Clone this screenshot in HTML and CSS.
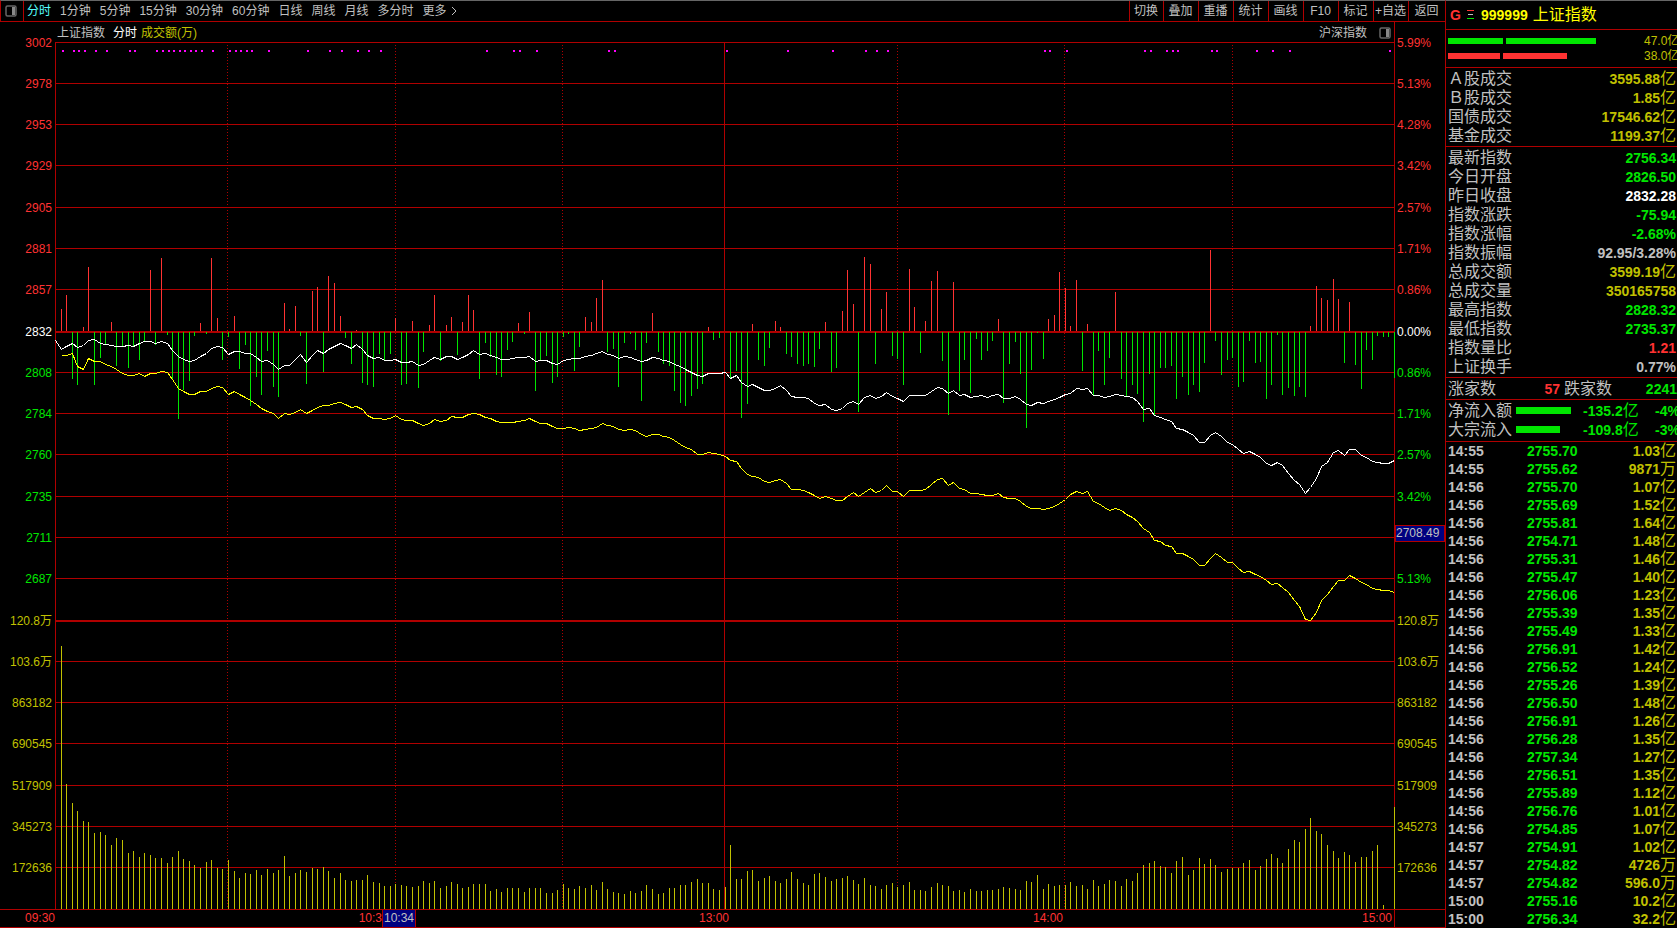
FILE: index.html
```html
<!DOCTYPE html>
<html lang="zh-CN">
<head>
<meta charset="utf-8">
<title>上证指数 分时</title>
<link rel="stylesheet" href="styles.css">
</head>
<body>
<div class="app">
  <main class="main">
    <header class="toolbar">
      <button class="panel-btn" aria-label="面板">
        <svg width="12" height="12" viewBox="0 0 12 12"><rect x="1" y="1" width="10" height="10" rx="1.500" fill="none" stroke="#666" stroke-width="1.500"/><rect x="7" y="2" width="3" height="8" fill="#888"/></svg>
      </button>
      <nav class="periods">
        <button class="active">分时</button><button>1分钟</button><button>5分钟</button><button>15分钟</button><button>30分钟</button><button>60分钟</button><button>日线</button><button>周线</button><button>月线</button><button>多分时</button><button class="more">更多<svg width="6" height="10" viewBox="0 0 6 10"><path d="M1 1l4 4-4 4" fill="none" stroke="currentColor"/></svg></button>
      </nav>
      <nav class="tools">
        <button>切换</button><button>叠加</button><button>重播</button><button>统计</button><button>画线</button><button>F10</button><button>标记</button><button>+自选</button><button>返回</button>
      </nav>
    </header>
    <section class="chart">
      <div class="axis axis-left">
        <span class="up">3002</span><span class="up">2978</span><span class="up">2953</span><span class="up">2929</span><span class="up">2905</span><span class="up">2881</span><span class="up">2857</span><span class="flat">2832</span><span class="down">2808</span><span class="down">2784</span><span class="down">2760</span><span class="down">2735</span><span class="down">2711</span><span class="down">2687</span><span class="vol">120.8万</span><span class="vol">103.6万</span><span class="vol">863182</span><span class="vol">690545</span><span class="vol">517909</span><span class="vol">345273</span><span class="vol">172636</span>
      </div>
      <div class="plot">
        <div class="plot-head">
          <span>上证指数</span><span class="flat view">分时</span><span class="vol">成交额(万)</span>
          <span class="market">沪深指数</span>
          <button class="panel-btn" aria-label="右侧面板">
            <svg width="12" height="12" viewBox="0 0 12 12"><rect x="1" y="1" width="10" height="10" rx="1.500" fill="none" stroke="#666" stroke-width="1.500"/><rect x="7" y="2" width="3" height="8" fill="#888"/></svg>
          </button>
        </div>
        <div class="canvas"><svg id="plot" viewBox="0 0 1340 867" preserveAspectRatio="none" role="img" aria-label="分时走势"></svg></div>
      </div>
      <div class="axis axis-right">
        <span class="up">5.99%</span><span class="up">5.13%</span><span class="up">4.28%</span><span class="up">3.42%</span><span class="up">2.57%</span><span class="up">1.71%</span><span class="up">0.86%</span><span class="flat">0.00%</span><span class="down">0.86%</span><span class="down">1.71%</span><span class="down">2.57%</span><span class="down">3.42%</span><span class="marked"><b class="tag price-tag">2708.49</b></span><span class="down">5.13%</span><span class="vol">120.8万</span><span class="vol">103.6万</span><span class="vol">863182</span><span class="vol">690545</span><span class="vol">517909</span><span class="vol">345273</span><span class="vol">172636</span>
      </div>
    </section>
    <footer class="times">
      <span>09:30</span><span class="marked">10:3<b class="tag time-tag">10:34</b></span><span>13:00</span><span>14:00</span><span class="close">15:00</span><span class="corner"></span>
    </footer>
  </main>
  <aside class="side">
    <h1 class="title">
      <span class="market-flag">G</span>
      <svg width="8" height="10" viewBox="0 0 8 10" shape-rendering="crispEdges"><rect width="7" height="1" fill="#ff3232"/><rect x="1" y="4" width="5" height="1" fill="#c0c0c0"/><rect y="8" width="7" height="1" fill="#00e600"/></svg>
      <span class="code">999999</span><span class="name">上证指数</span>
    </h1>
    <section class="power">
      <div><i class="bar green" style="width:55px"></i><i class="bar green" style="width:90px"></i><span>47.0亿</span></div>
      <div><i class="bar red" style="width:52px"></i><i class="bar red" style="width:64px"></i><span>38.0亿</span></div>
    </section>
    <dl class="facts">
      <div><dt>Ａ股成交</dt><dd class="vol">3595.88<small>亿</small></dd></div>
      <div><dt>Ｂ股成交</dt><dd class="vol">1.85<small>亿</small></dd></div>
      <div><dt>国债成交</dt><dd class="vol">17546.62<small>亿</small></dd></div>
      <div><dt>基金成交</dt><dd class="vol">1199.37<small>亿</small></dd></div>
    </dl>
    <dl class="facts">
      <div><dt>最新指数</dt><dd class="down">2756.34</dd></div>
      <div><dt>今日开盘</dt><dd class="down">2826.50</dd></div>
      <div><dt>昨日收盘</dt><dd class="flat">2832.28</dd></div>
      <div><dt>指数涨跌</dt><dd class="down">-75.94</dd></div>
      <div><dt>指数涨幅</dt><dd class="down">-2.68%</dd></div>
      <div><dt>指数振幅</dt><dd>92.95/3.28%</dd></div>
      <div><dt>总成交额</dt><dd class="vol">3599.19<small>亿</small></dd></div>
      <div><dt>总成交量</dt><dd class="vol">350165758</dd></div>
      <div><dt>最高指数</dt><dd class="down">2828.32</dd></div>
      <div><dt>最低指数</dt><dd class="down">2735.37</dd></div>
      <div><dt>指数量比</dt><dd class="up">1.21</dd></div>
      <div><dt>上证换手</dt><dd>0.77%</dd></div>
    </dl>
    <dl class="breadth">
      <dt>涨家数</dt><dd class="up">57</dd><dt>跌家数</dt><dd class="down">2241</dd>
    </dl>
    <section class="flows">
      <div><span class="label">净流入额</span><span><i class="bar green" style="width:55px"></i></span><span class="amount">-135.2<small>亿</small></span><span class="rate">-4%</span></div>
      <div><span class="label">大宗流入</span><span><i class="bar green" style="width:44px"></i></span><span class="amount">-109.8<small>亿</small></span><span class="rate">-3%</span></div>
    </section>
    <table class="ticks">
      <tbody>
        <tr><td>14:55</td><td>2755.70</td><td>1.03<small>亿</small></td></tr>
        <tr><td>14:55</td><td>2755.62</td><td>9871<small>万</small></td></tr>
        <tr><td>14:56</td><td>2755.70</td><td>1.07<small>亿</small></td></tr>
        <tr><td>14:56</td><td>2755.69</td><td>1.52<small>亿</small></td></tr>
        <tr><td>14:56</td><td>2755.81</td><td>1.64<small>亿</small></td></tr>
        <tr><td>14:56</td><td>2754.71</td><td>1.48<small>亿</small></td></tr>
        <tr><td>14:56</td><td>2755.31</td><td>1.46<small>亿</small></td></tr>
        <tr><td>14:56</td><td>2755.47</td><td>1.40<small>亿</small></td></tr>
        <tr><td>14:56</td><td>2756.06</td><td>1.23<small>亿</small></td></tr>
        <tr><td>14:56</td><td>2755.39</td><td>1.35<small>亿</small></td></tr>
        <tr><td>14:56</td><td>2755.49</td><td>1.33<small>亿</small></td></tr>
        <tr><td>14:56</td><td>2756.91</td><td>1.42<small>亿</small></td></tr>
        <tr><td>14:56</td><td>2756.52</td><td>1.24<small>亿</small></td></tr>
        <tr><td>14:56</td><td>2755.26</td><td>1.39<small>亿</small></td></tr>
        <tr><td>14:56</td><td>2756.50</td><td>1.48<small>亿</small></td></tr>
        <tr><td>14:56</td><td>2756.91</td><td>1.26<small>亿</small></td></tr>
        <tr><td>14:56</td><td>2756.28</td><td>1.35<small>亿</small></td></tr>
        <tr><td>14:56</td><td>2757.34</td><td>1.27<small>亿</small></td></tr>
        <tr><td>14:56</td><td>2756.51</td><td>1.35<small>亿</small></td></tr>
        <tr><td>14:56</td><td>2755.89</td><td>1.12<small>亿</small></td></tr>
        <tr><td>14:56</td><td>2756.76</td><td>1.01<small>亿</small></td></tr>
        <tr><td>14:56</td><td>2754.85</td><td>1.07<small>亿</small></td></tr>
        <tr><td>14:57</td><td>2754.91</td><td>1.02<small>亿</small></td></tr>
        <tr><td>14:57</td><td>2754.82</td><td>4726<small>万</small></td></tr>
        <tr><td>14:57</td><td>2754.82</td><td>596.0<small>万</small></td></tr>
        <tr><td>15:00</td><td>2755.16</td><td>10.2<small>亿</small></td></tr>
        <tr><td>15:00</td><td>2756.34</td><td>32.2<small>亿</small></td></tr>
      </tbody>
    </table>
  </aside>
</div>
<script src="chart.js"></script>
</body>
</html>
```

FILE: styles.css
```css
* { box-sizing: border-box; }

:root {
  --line: #b00000;
  --red: #ff3232;
  --green: #00e600;
  --gold: #c0c000;
  --text: #c0c0c0;
}

body {
  margin: 0;
  background: #000;
  color: var(--text);
  font: 12px/16px "Liberation Sans", "Noto Sans CJK SC", sans-serif;
}

button {
  margin: 0;
  padding: 0;
  border: 0;
  background: none;
  color: inherit;
  font: inherit;
  white-space: nowrap;
  cursor: pointer;
}

.up { color: var(--red); }
.down { color: var(--green); }
.flat { color: #fff; }
.vol { color: var(--gold); }

.app {
  display: grid;
  grid-template-columns: minmax(0, 1fr) 232px;
  min-height: 100vh;
  overflow: hidden;
}

.main {
  display: flex;
  flex-direction: column;
  min-width: 0;
}

/* toolbar */
.toolbar {
  display: flex;
  height: 22px;
  border-top: 1px solid #666;
  border-bottom: 1px solid var(--line);
  border-left: 1px solid var(--line);
}

.panel-btn {
  display: flex;
  align-items: center;
  justify-content: center;
}

.toolbar .panel-btn {
  width: 23px;
  padding-right: 2px;
  border-right: 1px solid var(--line);
}

.periods {
  display: flex;
  flex: 1;
  gap: 9px;
  padding-left: 3px;
}

.periods .active { color: #54ffff; }

.more {
  display: flex;
  align-items: center;
  gap: 4px;
}

.tools { display: flex; }

.tools button {
  width: 35px;
  padding-right: 1px;
  border-left: 1px solid var(--line);
}

.tools button:first-child { width: 34px; }
.tools button:last-child { width: 37px; }

/* chart */
.chart {
  display: grid;
  grid-template-columns: 55px minmax(0, 1fr) 50px;
  flex: 1;
}

.axis {
  display: grid;
  grid-template-rows: repeat(21, minmax(0, 1fr));
  align-items: center;
  padding-bottom: 20px;
}

.axis-left {
  padding-right: 3px;
  text-align: right;
}

.axis-right { padding-left: 2px; }

.plot {
  display: flex;
  flex-direction: column;
}

.plot-head {
  display: flex;
  align-items: center;
  height: 20px;
  gap: 4px;
  padding: 1px 3px 0 2px;
  border-right: 1px solid var(--line);
}

.plot-head .view { margin-left: 4px; }
.plot-head .market { margin-left: auto; }
.plot-head .panel-btn { margin-left: 8px; }

.canvas {
  position: relative;
  flex: 1;
}

.canvas svg {
  position: absolute;
  inset: 0;
  width: 100%;
  height: 100%;
  shape-rendering: crispEdges;
}

.grid-line { fill: var(--line); }
.half-hour { stroke: var(--line); stroke-dasharray: 1 2; }
.bar-up { fill: var(--red); }
.bar-down { fill: var(--green); }
.bar-volume { fill: var(--gold); }
.event { fill: #f0f; }
.index-line { fill: none; stroke: #fff; }
.lead-line { fill: none; stroke: #ff0; }

.marked {
  position: relative;
  align-self: stretch;
}

.tag {
  position: absolute;
  border: 1px solid var(--line);
  background: #000080;
  color: var(--text);
  font-weight: normal;
}

.price-tag {
  top: 8px;
  left: -2px;
  right: 0;
  line-height: 15px;
}

.times {
  display: grid;
  grid-template-columns: 55px 334fr 340fr 334fr 331fr 51px;
  height: 19px;
  border-top: 1px solid var(--line);
  border-bottom: 1px solid var(--line);
  color: var(--red);
  line-height: 17px;
  text-align: right;
}

.times .marked { padding-right: 7px; }
.times .close { padding-right: 2px; }
.times .corner { border-left: 1px solid var(--line); }

.time-tag {
  top: 0;
  right: -27px;
  width: 34px;
  border-width: 0 1px;
  text-align: center;
}

/* quote panel */
.side {
  overflow: hidden;
  border-top: 1px solid #666;
  border-left: 1px solid var(--line);
  font-size: 14px;
  font-weight: bold;
}

.side small, .side dt, .side .label, .name {
  font-size: 16px;
  font-weight: normal;
  line-height: 16px;
}

.side dt, .side .label { color: var(--text); }
.side dl, .side dd { margin: 0; }

.title {
  display: flex;
  align-items: center;
  height: 29px;
  margin: 0;
  padding-left: 4px;
  border-bottom: 1px solid var(--line);
  color: #ff0;
  font-size: 14px;
}

.market-flag { width: 17px; color: var(--red); }
.code { margin: 0 5px 0 6px; }

.power {
  height: 38px;
  padding: 3px 0 0 2px;
  border-bottom: 1px solid var(--line);
  font-size: 12px;
  font-weight: normal;
}

.power div {
  display: flex;
  align-items: center;
  height: 15px;
  gap: 3px;
}

.power span {
  width: 33px;
  margin-left: auto;
  color: var(--gold);
  white-space: nowrap;
}

.bar {
  display: block;
  height: 6px;
}

.bar.green { background: var(--green); }
.bar.red { background: var(--red); }

.facts {
  padding: 1px 1px 1px 2px;
  border-bottom: 1px solid var(--line);
}

.facts div {
  display: flex;
  align-items: center;
  justify-content: space-between;
  height: 19px;
}

.breadth {
  display: grid;
  grid-template-columns: 65px 51px 50px 1fr;
  align-items: center;
  height: 22px;
  padding-left: 2px;
  border-bottom: 1px solid var(--line);
}

.breadth dd { text-align: right; }
.breadth .up { padding-right: 4px; }

.flows {
  padding: 1px 0 2px 2px;
  border-bottom: 1px solid var(--line);
  color: var(--green);
}

.flows div {
  display: grid;
  grid-template-columns: 68px 67px 72px 1fr;
  align-items: center;
  height: 19px;
}

.flows .bar { height: 7px; }

.ticks {
  width: 100%;
  border-collapse: collapse;
  table-layout: fixed;
}

.ticks td {
  height: 18px;
  padding: 0;
  line-height: 16px;
  white-space: nowrap;
}

.ticks td:nth-child(1) { width: 81px; padding-left: 2px; }
.ticks td:nth-child(2) { width: 60px; color: var(--green); }
.ticks td:nth-child(3) { padding-right: 1px; color: var(--gold); text-align: right; }
```

FILE: chart.js
```js
// One sample per trading minute; all values are in chart units (y grows downward).
const WIDTH = 1340;
const HEIGHT = 867;
const ZERO = 289;
const MINUTES = 240;

// Buying (positive) and selling (negative) pressure, from minute 1.
const pressure = [
  22,36,-47,-53,4,64,-53,-26,-13,9,-34,-14,-36,-14,-28,-10,61,-13,73,-3,
  -47,-87,-58,-49,-4,8,-2,73,13,-28,-5,15,-37,-13,-74,-45,-63,-19,-55,-65,
  28,2,25,-4,-52,40,44,-40,55,48,15,-6,-32,1,-51,-53,-55,-22,-28,-22,
  13,-53,-52,10,-56,-20,6,36,-29,6,14,-23,9,36,21,-47,-11,-25,-43,-45,
  -18,-10,8,-2,19,-59,-28,-24,-51,-45,-5,-2,-39,-15,14,9,33,51,-20,-17,
  -55,-11,-2,-18,-69,-11,18,-20,-32,-34,-59,-71,-74,-64,-57,-52,4,-8,-6,0,
  -46,-39,-86,-72,7,-28,-34,-16,10,4,-22,-25,-32,-34,-32,-35,-17,9,-40,-36,
  20,61,27,-80,74,67,-32,22,39,-24,-27,-53,62,24,-21,10,50,60,-29,-83,
  49,-59,-28,-61,-7,-28,-19,-9,12,-71,-32,-10,-42,-96,-38,-1,-27,12,16,59,
  43,5,51,-39,7,-63,-19,-53,-26,39,-47,-64,-53,-62,-90,-42,-83,-36,-36,-34,
  -67,-45,-63,-53,-60,-31,81,-9,-43,-28,-26,-55,-50,-9,-31,-30,-67,-53,-3,-63,
  -56,-64,-55,-65,5,45,33,31,52,32,-31,29,-33,-57,-18,-28,-4,-5,-5,-46
];

// Index, from minute 0.
const index = [
  340,349,346,343,347,345,340,339,343,344,345,346,346,345,346,343,341,341,343,341,343,
  350,356,359,361,360,356,353,348,346,347,354,351,351,353,353,357,361,360,364,369,
  365,365,359,354,362,355,350,353,349,346,343,345,348,344,349,355,358,357,360,360,
  359,362,362,361,365,364,360,357,359,356,356,359,357,354,350,354,353,355,357,359,
  359,358,357,357,356,361,360,360,363,364,360,359,358,358,356,355,353,351,354,355,
  358,356,357,359,361,360,357,358,360,361,364,366,369,372,375,376,373,373,373,372,
  378,375,382,386,384,387,390,390,388,385,390,396,397,397,398,403,405,404,409,410,
  408,403,401,404,397,395,398,396,392,396,398,401,395,395,395,395,391,387,388,393,
  390,395,394,397,396,395,397,395,394,398,398,396,399,404,405,402,403,401,399,397,
  394,393,388,389,388,395,395,397,396,394,395,396,397,401,409,408,415,417,419,421,
  428,429,432,435,442,442,435,432,436,442,444,449,453,451,454,457,463,465,462,465,
  473,480,484,493,487,478,466,462,452,450,455,449,449,455,457,461,462,463,463,460
];

// Unweighted leading index, from minute 1.
const lead = [
  355,355,353,366,369,358,361,361,364,366,369,373,375,375,373,376,373,373,371,372,
  379,388,391,394,394,391,391,388,386,387,394,391,394,397,400,404,408,411,413,418,
  413,414,412,409,413,410,407,405,405,403,402,404,407,406,409,415,418,418,419,418,
  415,419,420,420,423,425,423,419,421,420,416,417,417,414,413,414,417,418,421,422,
  422,422,421,420,418,421,423,423,426,428,428,427,428,430,429,428,427,423,425,426,
  429,430,429,430,434,436,434,434,436,437,440,444,447,449,454,454,452,453,454,456,
  460,461,468,474,476,477,481,482,480,479,483,489,489,490,492,495,498,496,498,500,
  500,496,492,496,492,488,492,490,485,491,491,496,490,490,490,489,484,479,478,485,
  482,488,489,493,493,494,495,495,493,497,498,498,501,506,508,508,509,508,506,503,
  499,494,491,493,491,501,503,507,510,508,510,514,517,521,528,532,540,541,545,546,
  553,553,556,559,565,565,558,553,557,562,562,568,572,571,574,576,580,584,583,587,
  592,600,606,619,620,612,600,594,586,580,580,575,578,582,584,588,589,590,590,592
];

// Turnover, from minute 1.
const volume = [
  263,125,106,98,88,87,76,77,74,64,71,69,56,58,52,56,54,51,51,46,
  52,58,50,48,44,41,47,49,41,40,49,38,31,36,35,39,34,40,36,39,
  53,33,36,39,37,41,40,42,38,31,36,29,28,29,29,34,27,26,23,23,
  25,24,23,22,23,28,26,28,21,23,27,25,21,22,25,25,25,18,20,17,
  21,21,21,17,21,21,21,16,16,19,25,21,20,23,21,24,19,27,20,17,
  16,15,18,16,18,24,20,15,16,21,21,24,24,27,30,26,26,20,19,22,
  64,30,30,38,39,28,31,33,28,26,30,37,30,26,24,35,36,32,28,30,
  31,33,29,25,31,24,23,20,24,26,22,24,27,19,19,18,22,26,24,23,
  18,19,17,20,18,18,19,19,20,22,21,20,19,28,27,34,20,25,23,24,
  24,27,23,24,20,29,23,25,29,28,23,30,28,36,44,46,48,43,42,36,
  48,52,34,39,51,45,50,44,37,40,41,41,46,49,39,43,50,55,51,46,
  60,69,67,80,91,78,75,64,58,51,57,54,47,52,52,58,64,4,0,102
];

// Minutes that carry an event mark.
const events = [
  1,3,4,5,7,9,13,14,18,19,20,21,22,23,24,25,26,28,31,32,33,34,35,38,45,49,51,54,56,58,
  77,82,83,86,99,100,120,131,139,145,147,149,177,178,181,195,196,199,200,201,207,208,
  215,218,221,239
];

const svg = document.getElementById('plot');
const minuteX = (m) => Math.round(m * (WIDTH - 1) / MINUTES);

function add(tag, attrs) {
  const el = document.createElementNS('http://www.w3.org/2000/svg', tag);
  for (const key in attrs) el.setAttribute(key, attrs[key]);
  svg.appendChild(el);
}

function rect(cls, x, y, width, height) {
  add('rect', { class: cls, x, y, width, height });
}

function curve(cls, values, first) {
  const points = values.map((y, n) => `${minuteX(n + first) + 0.5},${y - 41.5}`);
  add('polyline', { class: cls, points: points.join(' ') });
}

for (let n = 0; n < 21; n++) {
  const double = n === 7 || n === 14;
  rect('grid-line', 0, Math.floor(n * HEIGHT / 21 + 0.1), WIDTH, double ? 2 : 1);
}
[0, 669, WIDTH - 1].forEach((x) => rect('grid-line', x, 0, 1, HEIGHT));
[172, 340, 507, 842, 1009, 1177].forEach((x) =>
  add('line', { class: 'half-hour', x1: x + 0.5, x2: x + 0.5, y1: 3, y2: HEIGHT }));

events.forEach((m) => rect('event', minuteX(m) + 1, 8, 2, 2));

pressure.forEach((v, n) => {
  const x = minuteX(n + 1);
  if (v > 0) rect('bar-up', x, ZERO - v, 1, v);
  if (v < 0) rect('bar-down', x, ZERO + 1, 1, -v);
});
volume.forEach((v, n) => rect('bar-volume', minuteX(n + 1), HEIGHT - v, 1, v));

curve('lead-line', lead, 1);
curve('index-line', index, 0);
```
